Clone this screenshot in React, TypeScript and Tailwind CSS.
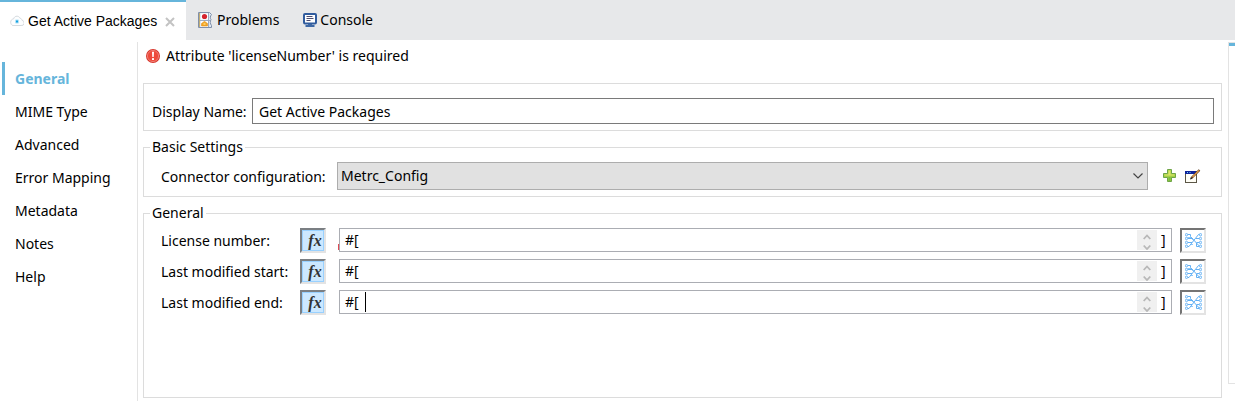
import React from 'react';

const sections = ['General', 'MIME Type', 'Advanced', 'Error Mapping', 'Metadata', 'Notes', 'Help'];

function CloudIcon() {
  return (
    <svg width="14" height="12" viewBox="0 0 14 12" fill="none" aria-hidden="true">
      <path d="M3 10.500H11A2.500 2.500 0 0 0 12 5.300C11.800 4 11 3.300 10 3.300 9.300 1.800 8.200 1.200 7 1.200 5.300 1.200 4 2.200 3.600 3.900 2 4 .7 5.200.7 7.200.7 9 1.700 10.500 3 10.500Z" fill="#fdfeff" stroke="#d0d6da" strokeWidth=".9" />
      <rect x="5" y="4.500" width="4" height="4" rx="1" fill="#b5e3f7" />
      <rect x="6" y="5.500" width="2" height="2" fill="#14a0df" />
    </svg>
  );
}

function ProblemsIcon() {
  return (
    <svg width="15" height="16" viewBox="0 0 15 16" fill="none" aria-hidden="true">
      <path d="M.5 .5H11.500L13.500 2.500C12 4.500 12 6 13 7.500 12 9.500 12 11.500 13.500 13.500V15.500H.5Z" fill="#dfe8f3" stroke="#8090aa" />
      <path d="M1.500 1V15" stroke="#c2ae76" />
      <rect x="3" y="1.500" width="7" height="6" fill="#fff" />
      <rect x="3" y="9" width="7" height="6" fill="#fff" />
      <path d="M10.500 1V15M2 8.500H12" stroke="#9dabc3" />
      <circle cx="6.500" cy="4.500" r="2.600" fill="#d5232f" />
      <path d="M3.500 14V11.500L6.500 9.300l3 2.200V14Z" fill="#f5a623" stroke="#e08f1c" strokeWidth=".6" />
      <path d="M5.500 11.500h2v1h-2z" fill="#fff0b0" />
    </svg>
  );
}

function ConsoleIcon() {
  return (
    <svg width="14" height="14" viewBox="0 0 14 14" fill="none" aria-hidden="true">
      <rect x="1" y="1" width="12" height="9.500" rx="1" fill="#fff" stroke="#315c9e" strokeWidth="2" />
      <path d="M3.500 3.500h6M3.500 5.500h7M3.500 7.500h4" stroke="#4d4d70" />
      <path d="M5 11h4v1h2.500v2h-9v-2H5Z" fill="#3d68a6" />
    </svg>
  );
}

function CloseIcon() {
  return (
    <svg width="10" height="10" viewBox="0 0 10 10" aria-hidden="true">
      <path d="M1 1l8 8M9 1L1 9" stroke="#c3c3c3" strokeWidth="2" />
    </svg>
  );
}

function ErrorIcon() {
  return (
    <svg width="14" height="14" viewBox="0 0 14 14" aria-hidden="true">
      <circle cx="7" cy="7" r="7" fill="#d8352b" />
      <circle cx="7" cy="7" r="5.600" fill="#ee4a3b" stroke="#f59b90" strokeWidth=".7" />
      <path d="M6 2.800h2L7.700 8H6.300Z" fill="#fff" />
      <rect x="6" y="9" width="2" height="2" rx=".6" fill="#fff" />
    </svg>
  );
}

function PlusIcon() {
  return (
    <svg width="14" height="14" viewBox="0 0 14 14" aria-hidden="true">
      <path d="M4.500 .5h4v4h4v4h-4v4h-4v-4h-4v-4h4Z" fill="#a4d047" stroke="#6fa548" />
      <path d="M5.500 1.500h2v4h4v1h-10v-1h4Z" fill="#dfe56c" />
      <path d="M5.500 8h2v4h-2z" fill="#79bd3e" />
    </svg>
  );
}

function EditIcon() {
  return (
    <svg width="16" height="15" viewBox="0 0 16 15" aria-hidden="true">
      <rect x=".5" y="2.500" width="11" height="11" fill="#fffef6" stroke="#5c5646" />
      <rect x="0" y="2" width="11" height="3" fill="#10249a" />
      <path d="M2 3.500h1M4.500 3.500h1" stroke="#6fd0ff" />
      <path d="M14.500 1L6.500 9" stroke="#5b3515" strokeWidth="2.200" />
      <path d="M14 1.300L7.500 8" stroke="#e8a04e" strokeWidth="1.200" />
      <path d="M5 10.500l.8-2.300 1.500 1.500Z" fill="#111" />
    </svg>
  );
}

function MappingIcon() {
  return (
    <svg width="17" height="15" viewBox="0 0 17 15" fill="none" stroke="#62b0f4" aria-hidden="true">
      <path d="M2.500 1.500H5.500V3.500L14.500 13.300M2.500 5.500H8M2.500 9.500H7M2.500 13.500H4L13.500 1.500H15M15 5.500H11M15 9.500H11.500M15 13.500H11.500V10" />
      <path d="M2.500 4.500H6L8.500 7.500M5 11.500H8" strokeWidth=".7" />
      <g fill="#eef7ff" strokeWidth=".9">
        <circle cx="1.500" cy="1.700" r="1.200" />
        <circle cx="1.500" cy="5.500" r="1.200" />
        <circle cx="1.500" cy="9.500" r="1.200" />
        <circle cx="1.500" cy="13.300" r="1.200" />
        <circle cx="15.500" cy="1.700" r="1.200" />
        <circle cx="15.500" cy="5.500" r="1.200" />
        <circle cx="15.500" cy="9.500" r="1.200" />
        <circle cx="15.500" cy="13.300" r="1.200" />
      </g>
    </svg>
  );
}

function StepperIcon() {
  return (
    <svg width="8" height="16" viewBox="0 0 8 16" fill="none" stroke="#b8b8b8" strokeWidth="1.800" aria-hidden="true">
      <path d="M.7 5L4 1.500 7.300 5M.7 11.500L4 15 7.300 11.500" />
    </svg>
  );
}

function ExpressionRow({ id, label, invalid, active }: { id: string; label: string; invalid?: boolean; active?: boolean }) {
  return (
    <div className="flex items-start">
      <label htmlFor={id} className="w-[139px] shrink-0 pt-[3px] whitespace-nowrap">{label}</label>
      <button
        type="button"
        aria-label="Expression mode"
        className="flex h-[25px] w-[26px] shrink-0 items-center justify-center border-2 border-t-[#7b7f83] border-r-[#e3e3e3] border-b-[#e3e3e3] border-l-[#7b7f83] bg-[#cce8ff] pl-1 font-['Liberation_Serif',serif] text-base leading-5 font-bold text-[#333] italic shadow-[inset_0_0_0_1px_#99d1ff]"
      >
        fx
      </button>
      <div className="relative ml-[13px] flex h-6 min-w-0 flex-1 items-center border border-[#abadb3] bg-white pl-[5px]">
        {invalid && <span className="absolute top-[15px] -left-0.5 h-1.5 w-px bg-[#e04a55]" />}
        <span>#[</span>
        {active && <span className="ml-[6px] h-5 w-px bg-black" />}
        <input id={id} className="h-5 min-w-0 flex-1 bg-transparent px-1 outline-none" />
        <button type="button" aria-label="Resize editor" className="flex h-5 w-5 items-end justify-center bg-[#f0f0f0]">
          <StepperIcon />
        </button>
        <span className="w-[14px] pl-1">]</span>
      </div>
      <button
        type="button"
        aria-label="Open mapping"
        className="ml-2 flex h-[25px] w-[26px] shrink-0 items-center justify-center border-2 border-t-[#747474] border-r-[#e3e3e3] border-b-[#e3e3e3] border-l-[#747474] bg-white"
      >
        <MappingIcon />
      </button>
    </div>
  );
}

export default function App() {
  return (
    <div className="flex h-screen flex-col overflow-hidden bg-white font-['Noto_Sans',sans-serif] text-sm leading-5 text-black">
      <div role="tablist" className="flex h-10 shrink-0 bg-[#e7e8ea]">
        <div className="flex w-[186px] items-center border-t-2 border-[#66b5db] bg-white pl-2.5">
          <button type="button" role="tab" aria-selected="true" className="flex items-center gap-1 font-['Liberation_Sans',sans-serif] whitespace-nowrap">
            <CloudIcon />
            Get Active Packages
          </button>
          <button type="button" aria-label="Close tab" className="mt-0.5 ml-2">
            <CloseIcon />
          </button>
        </div>
        <button type="button" role="tab" className="ml-3 flex items-center gap-1">
          <ProblemsIcon />
          Problems
        </button>
        <button type="button" role="tab" className="ml-6 flex items-center gap-[3px]">
          <ConsoleIcon />
          Console
        </button>
      </div>

      <div className="flex min-h-0 flex-1 pt-0.5">
        <nav className="w-[138px] shrink-0 border-r border-[#e3e3e3] pt-5 pl-0.5">
          {sections.map((name, i) => (
            <a
              key={name}
              href="#"
              className={
                i === 0
                  ? 'flex h-[33px] items-center border-l-3 border-[#66b5db] pl-2.5 font-bold text-[#66b5db]'
                  : 'flex h-[33px] items-center border-l-3 border-transparent pl-2.5'
              }
            >
              {name}
            </a>
          ))}
        </nav>

        <main className="flex min-w-0 flex-1 flex-col pr-1.5 pb-[3px] pl-[5px]">
          <div role="alert" className="flex h-[27px] items-center gap-1.5 pl-[3px]">
            <ErrorIcon />
            Attribute 'licenseNumber' is required
          </div>

          <div className="mt-3.5 flex h-12 items-center border border-[#dcdcdc] pt-2 pr-[7px] pl-2">
            <label htmlFor="display-name" className="w-[100px] shrink-0 pt-0.5 whitespace-nowrap">Display Name:</label>
            <input
              id="display-name"
              defaultValue="Get Active Packages"
              className="h-[26px] min-w-0 flex-1 border border-[#7a7a7a] px-1.5 outline-none"
            />
          </div>

          <fieldset className="mt-1.5 min-w-0 border border-[#dcdcdc] pt-[5px] pr-5 pb-1.5 pl-[17px]">
            <legend className="-ml-[11px] px-0.5">Basic Settings</legend>
            <div className="flex items-center">
              <label htmlFor="connector" className="w-[176px] shrink-0 pt-0.5 whitespace-nowrap">Connector configuration:</label>
              <div className="relative flex min-w-0 flex-1">
                <select
                  id="connector"
                  className="h-7 w-full appearance-none border border-[#adadad] bg-[#e1e1e1] pr-7 pl-[3px] outline-none"
                >
                  <option>Metrc_Config</option>
                </select>
                <svg className="pointer-events-none absolute top-2.5 right-[5px]" width="10" height="8" viewBox="0 0 10 8" fill="none" aria-hidden="true">
                  <path d="M.5 1.500L5 6 9.500 1.500" stroke="#444" strokeWidth="1.200" />
                </svg>
              </div>
              <button type="button" aria-label="Add configuration" className="ml-[15px]">
                <PlusIcon />
              </button>
              <button type="button" aria-label="Edit configuration" className="ml-2">
                <EditIcon />
              </button>
            </div>
          </fieldset>

          <fieldset className="mt-1.5 min-w-0 flex-1 border border-[#dcdcdc] pt-[5px] pr-[15px] pl-[17px]">
            <legend className="-ml-[11px] px-0.5">General</legend>
            <div className="flex flex-col gap-1.5">
              <ExpressionRow id="license-number" label="License number:" invalid />
              <ExpressionRow id="modified-start" label="Last modified start:" />
              <ExpressionRow id="modified-end" label="Last modified end:" active />
            </div>
          </fieldset>
        </main>

        <aside className="mb-[17px] w-[7px] shrink-0 border-t border-b border-l border-[#e3e3e3]">
          <div className="h-[3px] bg-[#66b5db]" />
        </aside>
      </div>
    </div>
  );
}
